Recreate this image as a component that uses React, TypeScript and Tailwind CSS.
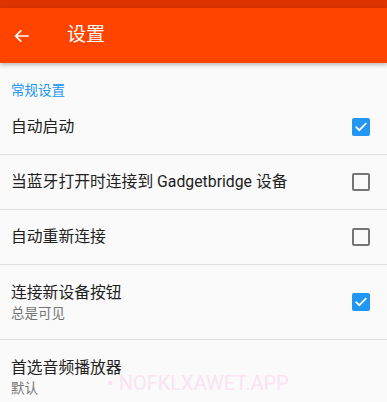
import React from 'react';

const font = { fontFamily: '"Roboto", "Noto Sans CJK SC", sans-serif' };

const CheckBox = ({ checked }: { checked: boolean }) =>
    checked ? (
        <div className="w-[18px] h-[18px] rounded-[2px] bg-[#2196f3] flex items-center justify-center">
            <svg width="14" height="14" viewBox="0 0 24 24" fill="none" stroke="#fff" strokeWidth="3" strokeLinecap="square">
                <path d="M4 12.5l5 5L20 6.5" />
            </svg>
        </div>
    ) : (
        <div className="w-[18px] h-[18px] rounded-[2px] border-2 border-[#757575]" />
    );

const Row = ({ title, summary, checked, h }: { title: string; summary?: string; checked?: boolean; h: string }) => (
    <div className={`flex items-center justify-between pl-[11px] pr-[17px] border-b border-[#dedede] ${h}`}>
        <div className="flex flex-col">
            <span className="text-[15.8px] leading-[20px] text-[#212121]">{title}</span>
            {summary && <span className="text-[13.5px] leading-[18px] text-[#757575] mt-[1px]">{summary}</span>}
        </div>
        {checked !== undefined && <CheckBox checked={checked} />}
    </div>
);

export default function App() {
    return (
        <div className="w-[387px] h-[402px] overflow-hidden bg-[#fafafa] relative" style={font}>
            <div className="h-[8px] bg-[#dd3300]" />
            <div className="h-[55px] bg-[#ff4400] flex items-center shadow-[0_2px_4px_rgba(0,0,0,0.25)] relative z-10">
                <svg className="ml-[13px]" width="18" height="18" viewBox="0 0 24 24" fill="none" stroke="#fff" strokeWidth="2.2">
                    <path d="M21 12H4M11 4.5L3.5 12l7.5 7.5" />
                </svg>
                <span className="ml-[36px] text-white text-[19px]">设置</span>
            </div>
            <div className="pt-[18px] pb-[1px] pl-[11px] text-[13.5px] leading-[18px] text-[#2196f3]">常规设置</div>
            <Row title="自动启动" checked={true} h="h-[55px]" />
            <Row title="当蓝牙打开时连接到 Gadgetbridge 设备" checked={false} h="h-[55px]" />
            <Row title="自动重新连接" checked={false} h="h-[55px]" />
            <Row title="连接新设备按钮" summary="总是可见" checked={true} h="h-[75px]" />
            <Row title="首选音频播放器" summary="默认" h="h-[75px]" />
            <div className="absolute left-[107px] top-[370px] text-[20px] leading-[26px] text-[#fbe3f4]">• NOFKLXAWET.APP</div>
        </div>
    );
}
